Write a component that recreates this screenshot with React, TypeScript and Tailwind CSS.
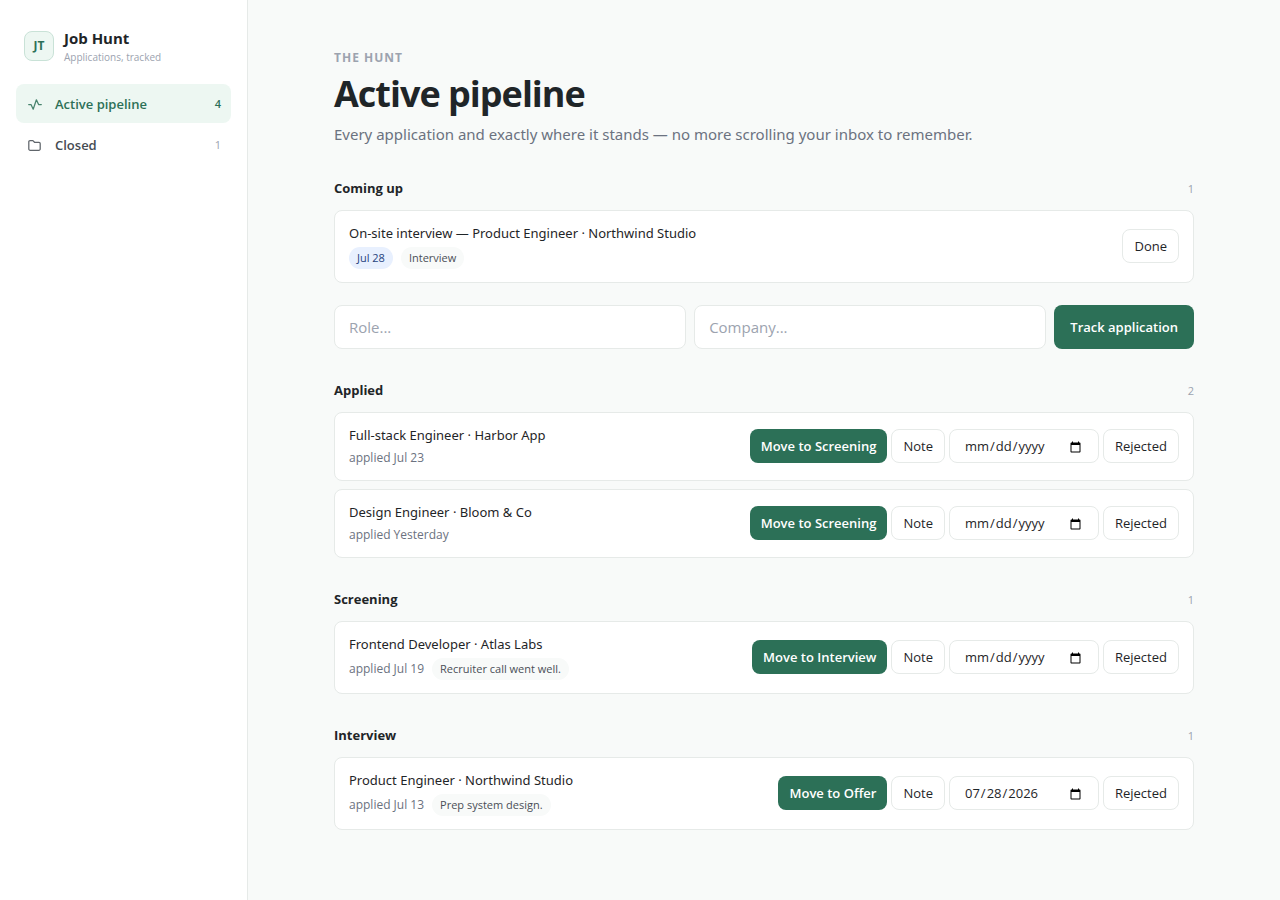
import { useState } from "react";

type Application = {
  id: number;
  role: string;
  company: string;
  applied: string;
  note?: string;
  date?: string;
};

type Stage = {
  name: string;
  next: string;
  items: Application[];
};

const stages: Stage[] = [
  {
    name: "Applied",
    next: "Screening",
    items: [
      { id: 1, role: "Full-stack Engineer", company: "Harbor App", applied: "Jul 23" },
      { id: 2, role: "Design Engineer", company: "Bloom & Co", applied: "Yesterday" },
    ],
  },
  {
    name: "Screening",
    next: "Interview",
    items: [
      { id: 3, role: "Frontend Developer", company: "Atlas Labs", applied: "Jul 19", note: "Recruiter call went well." },
    ],
  },
  {
    name: "Interview",
    next: "Offer",
    items: [
      { id: 4, role: "Product Engineer", company: "Northwind Studio", applied: "Jul 13", note: "Prep system design.", date: "2026-07-28" },
    ],
  },
];

const card =
  "flex items-center justify-between gap-4 rounded-lg border border-[#e6eae8] bg-white px-3.5 pt-3 pb-[13px]";
const cardTitle = "font-['Noto_Sans','Open_Sans',sans-serif] text-[13px] leading-5";
const ghostButton =
  "h-[34px] rounded-lg border border-[#e6eae8] bg-white px-[11px] pt-0.5 text-[13px] font-medium whitespace-nowrap text-[#1f2528]";
const primaryButton =
  "rounded-lg bg-[#2c7057] pt-0.5 text-[13px] font-semibold whitespace-nowrap text-white";
const field =
  "h-11 min-w-0 flex-1 rounded-lg border border-[#e6eae8] bg-white px-3.5 text-[15px] text-[#1f2528] placeholder:text-[#9ca3af]";

const SectionHead = ({ title, count }: { title: string; count: number }) => (
  <div className="mb-[11px] flex h-5 items-center justify-between">
    <h2 className="text-[13px] font-bold text-[#1f2528]">{title}</h2>
    <span className="text-[11px] text-[#9ca3af]">{count}</span>
  </div>
);

const Chip = ({ children, blue }: { children: string; blue?: boolean }) => (
  <span
    className={`flex h-[22px] items-center rounded-full px-2 text-[11px] font-medium ${
      blue ? "bg-[#e8f0fe] text-[#27437d]" : "bg-[#f8faf9] text-[#4a4f57]"
    }`}
  >
    {children}
  </span>
);

const ApplicationCard = ({ item, next }: { item: Application; next: string }) => {
  const [date, setDate] = useState(item.date ?? "");

  return (
    <li className={card}>
      <div className="flex min-w-0 flex-col gap-1">
        <p className={cardTitle}>
          {item.role} · {item.company}
        </p>
        <div className="flex items-center gap-2">
          <span className="text-[12px] leading-[18px] text-[#6b7280]">applied {item.applied}</span>
          {item.note && <Chip>{item.note}</Chip>}
        </div>
      </div>
      <div className="flex shrink-0 items-center gap-1">
        <button type="button" className={`${primaryButton} h-[34px] px-[11px]`}>
          Move to {next}
        </button>
        <button type="button" className={ghostButton}>Note</button>
        <input
          type="date"
          aria-label={`Date for ${item.role}`}
          value={date}
          onChange={(e) => setDate(e.target.value)}
          className="h-[34px] w-[150px] rounded-lg border border-[#e6eae8] bg-white px-3.5 pt-0.5 text-[13px]"
        />
        <button type="button" className={ghostButton}>Rejected</button>
      </div>
    </li>
  );
};

const navItem = "flex h-[39px] items-center gap-[11px] rounded-lg px-2.5 pt-0.5 text-[13px] font-semibold";

const Sidebar = () => (
  <aside className="w-[248px] shrink-0 border-r border-[#e6eae8] bg-white px-4 pt-[26px]">
    <div className="mb-[18px] flex h-10 items-center gap-2.5 px-2">
      <div className="flex size-[30px] items-center justify-center rounded-lg border border-[#c9e2d7] bg-[#edf7f2] text-[12px] font-bold text-[#2c7057]">
        JT
      </div>
      <div>
        <div className="text-[15px] leading-[22px] font-bold">Job Hunt</div>
        <div className="text-[10px] leading-4 text-[#9ca3af]">Applications, tracked</div>
      </div>
    </div>
    <nav className="flex flex-col gap-0.5">
      <a href="#active" aria-current="page" className={`${navItem} bg-[#edf7f2] text-[#2c7057]`}>
        <svg className="opacity-85" width="18" height="18" viewBox="0 0 18 18" fill="none" stroke="currentColor" strokeWidth="1.25" strokeLinecap="round" strokeLinejoin="round">
          <path d="M2.7 8.5H5l2.2 4.7 3.2-9.4 2.2 4.7h2.7" />
        </svg>
        <span className="flex-1">Active pipeline</span>
        <span className="text-[11px]">4</span>
      </a>
      <a href="#closed" className={`${navItem} text-[#454b52]`}>
        <svg className="opacity-85" width="18" height="18" viewBox="0 0 18 18" fill="none" stroke="currentColor" strokeWidth="1.25" strokeLinecap="round" strokeLinejoin="round">
          <path d="M2.8 4.8A1.2 1.2 0 0 1 4 3.6h2.9l1.6 1.7H13a1.2 1.2 0 0 1 1.2 1.2v5.4a1.4 1.4 0 0 1-1.4 1.4H4.2a1.4 1.4 0 0 1-1.4-1.4z" />
        </svg>
        <span className="flex-1">Closed</span>
        <span className="text-[11px] font-normal text-[#9ca3af]">1</span>
      </a>
    </nav>
  </aside>
);

export default function App() {
  const [role, setRole] = useState("");
  const [company, setCompany] = useState("");

  return (
    <div className="flex min-h-screen bg-[#f8faf9] font-['Open_Sans','Noto_Sans',sans-serif] text-[#1f2528]">
      <Sidebar />
      <main className="min-w-0 flex-1 px-10 pt-12 pb-16">
        <div className="mx-auto max-w-[860px]">
          <header className="mb-[33px]">
            <p className="text-[12px] leading-5 font-bold tracking-[1px] text-[#9ca3af]">THE HUNT</p>
            <h1 className="text-[36px] leading-[52px] font-bold tracking-[-1px]">Active pipeline</h1>
            <p className="mt-0.5 font-['Noto_Sans','Open_Sans',sans-serif] text-[15px] leading-6 text-[#6b7280]">
              Every application and exactly where it stands — no more scrolling your inbox to remember.
            </p>
          </header>

          <section>
            <SectionHead title="Coming up" count={1} />
            <div className={card}>
              <div className="flex flex-col gap-1">
                <p className={cardTitle}>On-site interview — Product Engineer · Northwind Studio</p>
                <div className="flex gap-2">
                  <Chip blue>Jul 28</Chip>
                  <Chip>Interview</Chip>
                </div>
              </div>
              <button type="button" className={ghostButton}>Done</button>
            </div>
          </section>

          <form className="mt-[22px] flex gap-2" onSubmit={(e) => e.preventDefault()}>
            <input
              type="text"
              aria-label="Role"
              placeholder="Role..."
              value={role}
              onChange={(e) => setRole(e.target.value)}
              className={field}
            />
            <input
              type="text"
              aria-label="Company"
              placeholder="Company..."
              value={company}
              onChange={(e) => setCompany(e.target.value)}
              className={field}
            />
            <button type="submit" className={`${primaryButton} h-11 px-4`}>
              Track application
            </button>
          </form>

          {stages.map((stage) => (
            <section key={stage.name} className="mt-8">
              <SectionHead title={stage.name} count={stage.items.length} />
              <ul className="flex flex-col gap-2">
                {stage.items.map((item) => (
                  <ApplicationCard key={item.id} item={item} next={stage.next} />
                ))}
              </ul>
            </section>
          ))}
        </div>
      </main>
    </div>
  );
}
